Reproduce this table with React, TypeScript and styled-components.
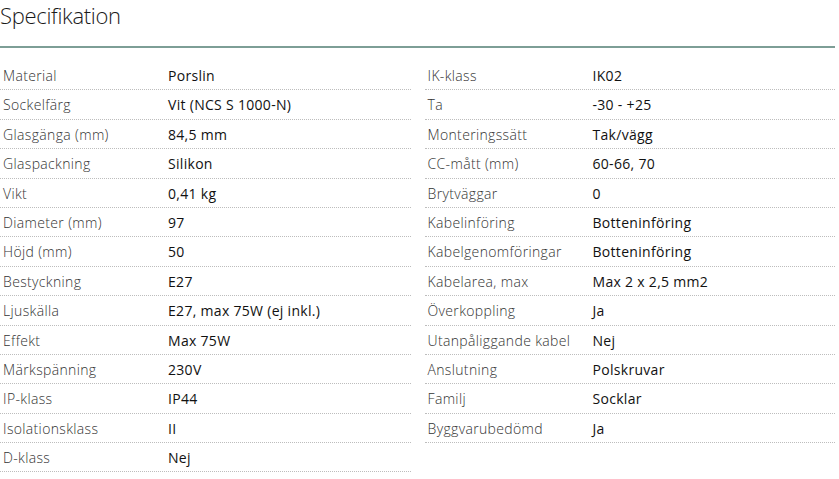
import React from "react";
import styled, { createGlobalStyle } from "styled-components";

const GlobalStyle = createGlobalStyle`
  *, *::before, *::after {
    box-sizing: border-box;
  }
  body {
    margin: 0;
    background: #fff;
    font-family: "Open Sans", "Liberation Sans", sans-serif;
  }
`;

type Spec = [string, string];

const leftSpecs: Spec[] = [
  ["Material", "Porslin"],
  ["Sockelfärg", "Vit (NCS S 1000-N)"],
  ["Glasgänga (mm)", "84,5 mm"],
  ["Glaspackning", "Silikon"],
  ["Vikt", "0,41 kg"],
  ["Diameter (mm)", "97"],
  ["Höjd (mm)", "50"],
  ["Bestyckning", "E27"],
  ["Ljuskälla", "E27, max 75W (ej inkl.)"],
  ["Effekt", "Max 75W"],
  ["Märkspänning", "230V"],
  ["IP-klass", "IP44"],
  ["Isolationsklass", "II"],
  ["D-klass", "Nej"],
];

const rightSpecs: Spec[] = [
  ["IK-klass", "IK02"],
  ["Ta", "-30 - +25"],
  ["Monteringssätt", "Tak/vägg"],
  ["CC-mått (mm)", "60-66, 70"],
  ["Brytväggar", "0"],
  ["Kabelinföring", "Botteninföring"],
  ["Kabelgenomföringar", "Botteninföring"],
  ["Kabelarea, max", "Max 2 x 2,5 mm2"],
  ["Överkoppling", "Ja"],
  ["Utanpåliggande kabel", "Nej"],
  ["Anslutning", "Polskruvar"],
  ["Familj", "Socklar"],
  ["Byggvarubedömd", "Ja"],
];

const Section = styled.section`
  width: 835px;
`;

const Title = styled.h2`
  margin: 0;
  height: 46px;
  font-size: 22px;
  font-weight: 300;
  line-height: 30px;
  color: #1a1a1a;
  letter-spacing: -0.3px;
`;

const Rule = styled.div`
  height: 2px;
  background: #7d9e96;
`;

const Columns = styled.div`
  display: grid;
  grid-template-columns: 1fr 1fr;
  column-gap: 14px;
  padding-top: 13px;
  align-items: start;
`;

const SpecList = styled.dl`
  margin: 0;
`;

const Row = styled.div`
  display: grid;
  grid-template-columns: 168px 1fr;
  height: 29.4px;
  line-height: 29px;
  border-bottom: 1px dotted #bdbdbd;
  font-size: 14px;
  white-space: nowrap;
`;

const Label = styled.dt`
  padding-left: 3px;
  font-weight: 300;
  letter-spacing: 0.35px;
  color: #333;
`;

const Value = styled.dd`
  margin: 0;
  font-weight: 500;
  letter-spacing: 0.3px;
  color: #111;
`;

const SpecTable = ({ items }: { items: Spec[] }) => (
  <SpecList>
    {items.map(([label, value]) => (
      <Row key={label}>
        <Label>{label}</Label>
        <Value>{value}</Value>
      </Row>
    ))}
  </SpecList>
);

export default function App() {
  return (
    <Section>
      <GlobalStyle />
      <Title>Specifikation</Title>
      <Rule />
      <Columns>
        <SpecTable items={leftSpecs} />
        <SpecTable items={rightSpecs} />
      </Columns>
    </Section>
  );
}
